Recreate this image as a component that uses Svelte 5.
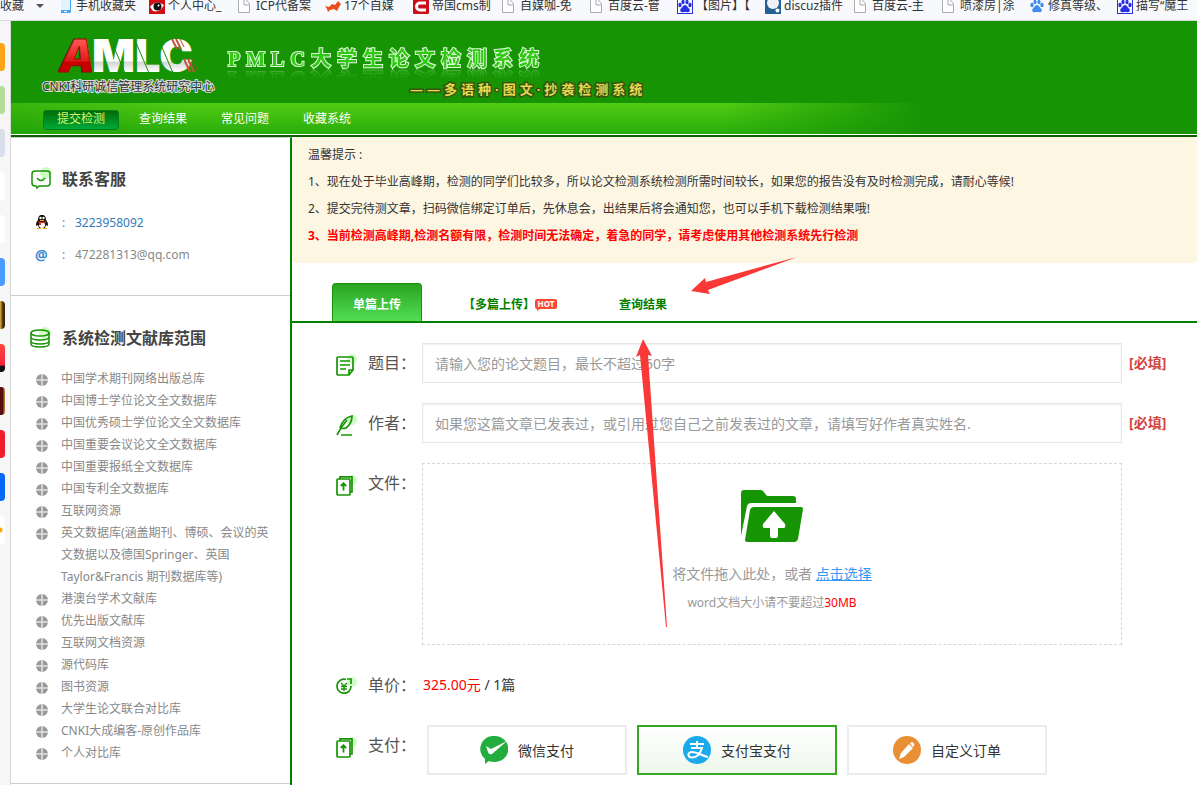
<script lang="ts">
	type Bookmark = { icon: string; text: string };

	let bookmarks: Bookmark[] = [
		{ icon: "phone", text: "手机收藏夹" },
		{ icon: "eye", text: "个人中心_" },
		{ icon: "file", text: "ICP代备案" },
		{ icon: "fox", text: "17个自媒" },
		{ icon: "c", text: "帝国cms制" },
		{ icon: "file", text: "自媒咖-免" },
		{ icon: "file", text: "百度云-管" },
		{ icon: "paw", text: "【图片】【" },
		{ icon: "discuz", text: "discuz插件" },
		{ icon: "file", text: "百度云-主" },
		{ icon: "file", text: "喷漆房|涂" },
		{ icon: "paw-light", text: "修真等级、" },
		{ icon: "paw", text: "描写“魔王" },
	];

	// left rail tiles, only their right edge is visible
	let tiles = [
		"#ffa318",
		"#b3dd98",
		"#d8dfea",
		"#ffffff",
		"#ffffff",
		"#4a9bff",
		"linear-gradient(90deg, #e8b437, #3b2a10 60%)",
		"linear-gradient(#ff4a3c, #f5203e 75%, #111 80%)",
		"linear-gradient(90deg, #5a0d10 50%, #c98a3a)",
		"#f01b2d",
		"#0567f5",
		"radial-gradient(circle at 0 50%, #ffa500 2px, #fff 3px)",
	];

	let menu = ["提交检测", "查询结果", "常见问题", "收藏系统"];

	let databases = [
		"中国学术期刊网络出版总库",
		"中国博士学位论文全文数据库",
		"中国优秀硕士学位论文全文数据库",
		"中国重要会议论文全文数据库",
		"中国重要报纸全文数据库",
		"中国专利全文数据库",
		"互联网资源",
		"英文数据库(涵盖期刊、博硕、会议的英文数据以及德国Springer、英国Taylor&Francis 期刊数据库等)",
		"港澳台学术文献库",
		"优先出版文献库",
		"互联网文档资源",
		"源代码库",
		"图书资源",
		"大学生论文联合对比库",
		"CNKI大成编客-原创作品库",
		"个人对比库",
	];

	let pays = [
		{ id: "wechat", name: "微信支付" },
		{ id: "alipay", name: "支付宝支付" },
		{ id: "custom", name: "自定义订单" },
	];

	let tab = 0;
	let pay = "alipay";
	let title = "";
	let author = "";
</script>

{#snippet uploadIcon()}
	<svg class="row-icon" viewBox="0 0 22 22">
		<circle cx="16" cy="6" r="5" fill="#cffcc4" />
		<path d="M4 5V2.800h12V18h-2" fill="none" stroke="#179404" stroke-width="1.700" />
		<rect x="1" y="5" width="13" height="16" rx="1" fill="#fff" stroke="#179404" stroke-width="1.700" />
		<path d="M7.500 16.500V9.500M4.800 12l2.700-2.700L10.200 12" fill="none" stroke="#179404" stroke-width="1.800" />
	</svg>
{/snippet}

<div class="page">
	<nav class="bookmarks">
		<a class="fav" href="#fav">收藏 <i></i></a>
		{#each bookmarks as item}
			<a class="bookmark" href="#bookmark">
				<svg width={item.icon == "phone" ? 12 : 16} height="16">
					{#if item.icon == "phone"}
						<rect x="-1" y="0" width="11" height="15" rx="1.500" fill="#49a5ee" />
						<rect x="0" y="2" width="9" height="10" fill="#e3f2ff" />
						<rect x="3" y="13" width="3" height="1" fill="#fff" />
					{:else if item.icon == "eye"}
						<rect width="16" height="16" fill="#d20d14" />
						<path d="M1 9Q7 1 15 7Q11 15 4 13Z" fill="#fff" />
						<circle cx="8.500" cy="8.500" r="4" fill="#111" />
						<circle cx="9.500" cy="7.500" r="1" fill="#fff" />
					{:else if item.icon == "file"}
						<path d="M1.500 1.500h7l4 4v9h-11zM7 2v5h5" fill="#fff" stroke="#aaa" />
					{:else if item.icon == "fox"}
						<path d="M0 8L4 9 7 6 10 7 13 3 16 6 14 9 12 13 9 11 5 12 3 14 2 11Z" fill="#e8501c" />
					{:else if item.icon == "c"}
						<rect width="16" height="16" rx="1" fill="#c8101c" />
						<path d="M13 5H7a3 3 0 0 0 0 7h6" fill="none" stroke="#fff" stroke-width="3" />
					{:else if item.icon == "discuz"}
						<rect width="16" height="16" fill="#246196" />
						<circle cx="8" cy="5" r="6" fill="#eef3f7" />
						<circle cx="12.500" cy="12.500" r="2" fill="#fff" />
					{:else}
						<g fill={item.icon == "paw" ? "#2932e1" : "#3f8cf0"}>
							{#if item.icon == "paw"}
								<path d="M0 0h16v16H0zM1 1v14h14V1z" fill-rule="evenodd" />
							{/if}
							<ellipse cx="3" cy="7" rx="1.700" ry="2.200" />
							<ellipse cx="6" cy="4" rx="1.600" ry="2.200" />
							<ellipse cx="10" cy="4" rx="1.600" ry="2.200" />
							<ellipse cx="13" cy="7" rx="1.700" ry="2.200" />
							<path d="M8 7c2 0 3 3 4.500 4 1 2-.5 3.500-2 3.200-2-.4-3-.4-5 0-1.500.3-3-1.200-2-3.200C5 10 6 7 8 7z" />
						</g>
					{/if}
				</svg>
				<span>{item.text}</span>
			</a>
		{/each}
	</nav>

	<div class="window">
		<aside class="rail">
			{#each tiles as color}
				<i style="background: {color}"></i>
			{/each}
		</aside>

		<div class="site">
			<header>
				<div class="logo">
					<svg width="150" height="36" viewBox="0 0 150 36">
						<defs>
							<linearGradient id="silver" x2="0" y2="1">
								<stop offset="0.600" stop-color="#fff" />
								<stop offset="0.620" stop-color="#d4d4d4" />
								<stop offset="0.800" stop-color="#fff" />
							</linearGradient>
							<linearGradient id="ruby" x2="0" y2="1">
								<stop offset="0.200" stop-color="#ff5a55" />
								<stop offset="0.600" stop-color="#e01818" />
								<stop offset="0.620" stop-color="#c80000" />
							</linearGradient>
						</defs>
						<text x="34" y="35" fill="url(#silver)">MLC</text>
						<text class="slanted" x="1" y="35" fill="url(#ruby)" stroke="#8d0b05">A</text>
						<path d="M114 2l5 10M118 2l5 10M126 22l6 13M130 22l6 13" stroke="#c3553a" stroke-width="2" />
						<path d="M122 2l4 8M134 22l6 13" stroke="#8f5a2a" />
						<path d="M52 1l15 35M76 1l15 35M100 1l15 35" stroke="#179404" />
					</svg>
					<p>CNKI科研诚信管理系统研究中心</p>
				</div>
				<div class="headline">
					<h1>PMLC大学生论文检测系统</h1>
					<p>——多语种·图文·抄袭检测系统</p>
				</div>
			</header>

			<nav class="menu">
				{#each menu as entry, i}
					<a href="#menu" class:active={i == 0}>{entry}</a>
				{/each}
			</nav>

			<div class="content">
				<aside class="sidebar">
					<section class="contact">
						<h2>
							<svg width="22" height="22" viewBox="0 0 22 22">
								<circle cx="16" cy="6" r="6" fill="#cffcc4" />
								<path d="M5 4h12q3 0 3 3v9q0 3-3 3H9l-2 2-1-2H5q-3 0-3-3V7q0-3 3-3z" fill="none" stroke="#179404" stroke-width="1.500" />
								<path d="M7 11q4 5 8 0" fill="none" stroke="#179404" stroke-width="1.500" />
							</svg>
							联系客服
						</h2>
						<p>
							<svg width="14" height="16" viewBox="0 0 14 16">
								<path d="M7 1c3 0 4 2 4 5 2 2 2 4 2 6l-2-1-1 3H4l-1-3-2 1c0-2 0-4 2-6 0-3 1-5 4-5z" fill="#111" />
								<ellipse cx="7" cy="11" rx="3" ry="3" fill="#fff" />
								<circle cx="5.500" cy="4" r="1.200" fill="#fff" />
								<circle cx="8.500" cy="4" r="1.200" fill="#fff" />
								<path d="M3 7q4 2 8 0v2H6v2H4V9z" fill="#e3281c" />
								<path d="M2 14h4v1H2zM8 14h4v1H8zM5 6h4v1H5z" fill="#f5ac13" />
							</svg>
							<b>:</b>
							<a href="#qq">3223958092</a>
						</p>
						<p>
							<span class="at">@</span>
							<b>:</b>
							<span>472281313@qq.com</span>
						</p>
					</section>

					<section class="library">
						<h2>
							<svg width="22" height="22" viewBox="0 0 22 22">
								<circle cx="15" cy="7" r="6" fill="#cffcc4" />
								<g fill="none" stroke="#179404" stroke-width="1.500">
									<ellipse cx="10" cy="7" rx="9" ry="3" />
									<path d="M1 7v11c0 4 18 4 18 0V7M1 11c0 4 18 4 18 0M1 15c0 4 18 4 18 0" />
								</g>
							</svg>
							系统检测文献库范围
						</h2>
						<ul>
							{#each databases as db}
								<li>
									<svg width="12" height="12" viewBox="0 0 12 12">
										<circle cx="6" cy="6" r="6" fill="#999" />
										<path d="M6 0v12M0 6h12" stroke="#e4e4e4" stroke-width="1.500" />
									</svg>
									<span>{db}</span>
								</li>
							{/each}
						</ul>
					</section>
				</aside>

				<main>
					<div class="tips">
						<p>温馨提示 :</p>
						<p>1、现在处于毕业高峰期，检测的同学们比较多，所以论文检测系统检测所需时间较长，如果您的报告没有及时检测完成，请耐心等候!</p>
						<p>2、提交完待测文章，扫码微信绑定订单后，先休息会，出结果后将会通知您，也可以手机下载检测结果哦!</p>
						<p class="warn">3、当前检测高峰期,检测名额有限，检测时间无法确定，着急的同学，请考虑使用其他检测系统先行检测</p>
					</div>

					<div class="tabs">
						<button class:active={tab == 0} on:click={() => (tab = 0)}>单篇上传</button>
						<button class:active={tab == 1} on:click={() => (tab = 1)}>【多篇上传】<span class="hot">HOT</span></button>
						<button class:active={tab == 2} on:click={() => (tab = 2)}>查询结果</button>
					</div>

					<form on:submit|preventDefault>
						<div class="row">
							<svg class="row-icon" viewBox="0 0 22 22">
								<circle cx="16" cy="5" r="5" fill="#cffcc4" />
								<path d="M2 3h14q1 0 1 1v12l-4 5H2q-1 0-1-1V4q0-1 1-1zM17 16h-4v5M4 7h10M4 11h10M4 15h6" fill="none" stroke="#179404" stroke-width="1.700" />
							</svg>
							<label for="title">题目：</label>
							<input id="title" type="text" bind:value={title} placeholder="请输入您的论文题目，最长不超过50字" />
							<span class="required">[必填]</span>
						</div>

						<div class="row">
							<svg class="row-icon" viewBox="0 0 22 22">
								<circle cx="16" cy="6" r="5" fill="#cffcc4" />
								<path d="M1 21Q5 13 11 6M4 14C6 7 10 3 16 2c0 4-2 9-6 12q-3 1-6 0M5 21h11" fill="none" stroke="#179404" stroke-width="1.700" />
							</svg>
							<label for="author">作者：</label>
							<input id="author" type="text" bind:value={author} placeholder="如果您这篇文章已发表过，或引用过您自己之前发表过的文章，请填写好作者真实姓名." />
							<span class="required">[必填]</span>
						</div>

						<div class="row">
							{@render uploadIcon()}
							<span class="label">文件：</span>
							<div class="drop">
								<svg width="62" height="53" viewBox="0 0 62 53">
									<path d="M0 46V3q0-3 3-3h16q2 0 3 1l4 5h26q3 0 3 3v4H10q-3 0-4 3z" fill="#179404" />
									<path d="M13 17h47q2 0 2 2l-5 30q-1 3-3 3H6q-2 0-2-2l5-30q1-3 4-3z" fill="#179404" />
									<path d="M33 21l11 13q1 3-1 4h-6v8q0 2-2 2h-4q-2 0-2-2v-8h-6q-2-1-1-4z" fill="#fff" />
								</svg>
								<p>将文件拖入此处，或者 <a href="#choose">点击选择</a></p>
								<p class="hint">word文档大小请不要超过<em>30MB</em></p>
							</div>
						</div>

						<div class="row">
							<svg class="row-icon" viewBox="0 0 22 22">
								<circle cx="16" cy="6" r="5" fill="#cffcc4" />
								<path d="M10 3.500A7 7 0 1 0 15 10M11 3h4v5" fill="none" stroke="#179404" stroke-width="1.700" />
								<path d="M5 7l3 3 3-3M8 10v5M5 10.500h6M5 13h6" fill="none" stroke="#179404" stroke-width="1.400" />
							</svg>
							<span class="label">单价：</span>
							<p class="price"><em>325.00元</em> / 1篇</p>
						</div>

						<div class="row">
							{@render uploadIcon()}
							<span class="label">支付：</span>
							<div class="pays">
								{#each pays as item}
									<button type="button" class:chosen={pay == item.id} on:click={() => (pay = item.id)}>
										<svg width="28" height="28" viewBox="0 0 28 28">
											{#if item.id == "wechat"}
												<path d="M14 0a14 13 0 1 1-5 25l-4 3v-5A13 13 0 0 1 14 0z" fill="#22ad3e" />
												<path d="M6 10l5 3L27 5 12 18q-3 1-4-2z" fill="#fff" />
											{:else if item.id == "alipay"}
												<circle cx="14" cy="14" r="14" fill="#1aa9ea" />
												<path d="M7 8h14M14 5v7M8 12h11q-3 9-9 9.500c-6 .5-6-5.500-1-5.500 6 0 10 4 16 5" fill="none" stroke="#fff" stroke-width="2" />
											{:else}
												<circle cx="14" cy="14" r="14" fill="#e99034" />
												<path d="M16 8l4 4-9 9-5 2 2-6zM17 7l2-1q3 1 2 4l-1 1z" fill="#fff" />
											{/if}
										</svg>
										{item.name}
									</button>
								{/each}
							</div>
						</div>
					</form>

					<!-- red pointers to the result tab -->
					<svg class="pointers" width="162" height="372" viewBox="0 0 162 372">
						<g fill="#fb3838">
							<path d="M55 34L69 21 70 25 161 0 72 33 74 37Z" />
							<path d="M7 82L16 99 12 98 31 370 30 370 4 98 0 100Z" />
						</g>
					</svg>
				</main>
			</div>
		</div>
	</div>
</div>

<style>
	:global(body) {
		margin: 0;
		background: #fff;
	}

	.page {
		display: flex;
		flex-direction: column;
		min-height: 100vh;
		overflow: hidden;
		font-family: "Noto Sans", "Noto Sans CJK SC", sans-serif;
		font-size: 12px;
		color: #333;
	}

	.page * {
		box-sizing: border-box;
	}

	p, h1, h2, ul {
		margin: 0;
		padding: 0;
	}

	a {
		text-decoration: none;
	}

	em {
		font-style: normal;
		color: #f00;
	}

	button, input {
		font-family: inherit;
	}

	/* browser bar */
	.bookmarks {
		display: flex;
		height: 21px;
		background: #f8f9fd;
		border-bottom: 1px solid #d8dbe3;
	}
	.bookmarks a {
		display: flex;
		flex-shrink: 0;
		align-items: center;
		gap: 3px;
		height: 12px;
		line-height: 12px;
		color: #333;
		white-space: nowrap;
	}
	.bookmarks .fav {
		width: 61px;
		gap: 12px;
	}
	.fav i {
		border: 4px solid transparent;
		border-top-color: #555;
		border-bottom: 0;
	}
	.bookmark {
		width: 88px;
	}
	.bookmark svg {
		flex-shrink: 0;
	}

	.window {
		display: flex;
		flex: 1;
	}
	.rail {
		display: flex;
		flex-direction: column;
		gap: 15px;
		width: 11px;
		padding-top: 22px;
		background: #f6f6f6;
		border-right: 1px solid #d8d8d8;
	}
	.rail i {
		width: 5px;
		height: 28px;
		border-radius: 0 4px 4px 0;
	}

	.site {
		display: flex;
		flex: 1;
		flex-direction: column;
		min-width: 0;
	}

	header {
		display: flex;
		height: 82px;
		padding-left: 31px;
		background: #179404;
	}
	.logo {
		width: 184px;
		padding-top: 16px;
	}
	.logo svg {
		display: block;
		margin-left: 16px;
		font-family: Inter, sans-serif;
		font-size: 45px;
		font-weight: 900;
	}
	.slanted {
		font-style: italic;
	}
	.logo p {
		padding-top: 4px;
		line-height: 20px;
		color: #333;
		white-space: nowrap;
		-webkit-text-stroke: 2px #ddd;
		paint-order: stroke fill;
	}
	.headline {
		padding-top: 24px;
		white-space: nowrap;
	}
	.headline h1 {
		padding-left: 2px;
		font-family: "Liberation Serif", "Noto Sans CJK SC", serif;
		font-size: 20px;
		line-height: 28px;
		letter-spacing: 6px;
		color: #2fc912;
		-webkit-text-stroke: 2px #e2f5df;
		paint-order: stroke fill;
		-webkit-box-reflect: below -8px linear-gradient(transparent 50%, rgba(0, 0, 0, 0.4));
	}
	.headline p {
		padding-left: 184px;
		font-size: 13px;
		font-weight: bold;
		line-height: 32px;
		letter-spacing: 4px;
		color: #e8d94f;
		-webkit-text-stroke: 3px #35560f;
		paint-order: stroke fill;
	}

	.menu {
		display: flex;
		gap: 6px;
		height: 34px;
		padding: 7px 32px 0;
		background:
			linear-gradient(90deg, rgba(23, 148, 4, 0.4), transparent 15%, transparent 60%, #179404 77%),
			linear-gradient(#52cb13, #28ac0a);
		border-bottom: 2px solid #0b6102;
		box-shadow: inset 0 -1px #fff;
	}
	.menu a {
		width: 76px;
		height: 20px;
		line-height: 18px;
		text-align: center;
		color: #fff;
	}
	.menu .active {
		color: #d6f56b;
		background: linear-gradient(#006d08, #00a838);
		border: 1px solid #078015;
		border-radius: 3px;
		line-height: 16px;
	}

	.content {
		display: flex;
		flex: 1;
	}

	.sidebar {
		flex-shrink: 0;
		width: 281px;
		color: #888;
		border-top: 1px solid #ccc;
		border-right: 2px solid #008000;
	}
	.sidebar section {
		border-bottom: 1px solid #ccc;
	}
	.sidebar h2 {
		display: flex;
		gap: 10px;
		padding-left: 19px;
		font-size: 16px;
		line-height: 24px;
		color: #444;
	}
	.contact {
		padding: 29px 0 25px;
	}
	.contact h2 {
		margin-bottom: 15px;
	}
	.contact p {
		display: flex;
		align-items: center;
		height: 32px;
		padding-left: 24px;
	}
	.contact a {
		color: #337ab7;
	}
	.contact b {
		width: 13px;
		margin-left: 13px;
		font-weight: normal;
	}
	.at {
		width: 14px;
		font-size: 14px;
		font-weight: bold;
		color: #3a87cf;
	}

	.library {
		padding: 30px 0 19px;
	}
	.library h2 {
		margin-bottom: 18px;
	}
	li {
		display: flex;
		gap: 13px;
		padding: 0 14px 0 25px;
		line-height: 22px;
		list-style: none;
	}
	li svg {
		flex-shrink: 0;
		margin-top: 6px;
	}

	main {
		position: relative;
		flex: 1;
		min-width: 0;
	}
	.tips {
		padding: 4px 16px 14px;
		line-height: 27px;
		background: #fdf6e3;
		border-radius: 4px;
	}
	.warn {
		font-weight: bold;
		color: #f00;
	}

	.tabs {
		display: flex;
		gap: 20px;
		padding: 20px 40px 0;
		border-bottom: 2px solid #008000;
	}
	.tabs button {
		display: flex;
		align-items: center;
		height: 38px;
		padding: 3px 20px 0;
		font-size: 12px;
		font-weight: bold;
		color: #008000;
		background: none;
		border: 1px solid transparent;
		border-bottom: 0;
		border-radius: 4px 4px 0 0;
	}
	.tabs .active {
		color: #fff;
		background: linear-gradient(#2aa520, #52dd55);
		border-color: #179404;
	}
	.hot {
		position: relative;
		width: 22px;
		font-size: 8px;
		line-height: 10px;
		text-align: center;
		color: #fff;
		background: #fb4b37;
		border-radius: 2px;
	}
	.hot::after {
		content: "";
		position: absolute;
		top: 10px;
		left: 2px;
		border-top: 2px solid #fb4b37;
		border-right: 3px solid transparent;
	}

	form {
		display: flex;
		flex-direction: column;
		gap: 20px;
		padding: 20px 30px 9px 44px;
	}
	.row {
		display: grid;
		grid-template-columns: 32px 54px minmax(0, 1fr) 45px;
		align-items: start;
	}
	.row-icon {
		width: 22px;
		height: 22px;
		margin-top: 11px;
	}
	label, .label {
		font-size: 16px;
		line-height: 40px;
		color: #555;
		white-space: nowrap;
	}
	input {
		width: 100%;
		height: 40px;
		padding: 0 12px;
		font-size: 14px;
		border: 1px solid #e6e6e6;
		box-shadow: inset 0 1px 2px #eee;
		outline: none;
	}
	input::placeholder {
		color: #999;
	}
	.required {
		padding-left: 7px;
		font-size: 14px;
		font-weight: bold;
		line-height: 40px;
		color: #d0453f;
		white-space: nowrap;
	}

	.drop {
		padding: 26px 0 29px;
		text-align: center;
		color: #999;
		border: 1px dashed #d5d5d5;
	}
	.drop svg {
		display: block;
		margin: 0 auto 19px;
	}
	.drop p {
		font-size: 14px;
		line-height: 24px;
	}
	.drop a {
		color: #3498f5;
		text-decoration: underline;
	}
	.drop .hint {
		margin-top: 5px;
		font-size: 12px;
	}
	.price {
		padding-left: 1px;
		font-size: 14px;
		line-height: 40px;
	}

	.pays {
		display: flex;
		gap: 10px;
		padding-left: 5px;
	}
	.pays button {
		display: flex;
		align-items: center;
		justify-content: center;
		gap: 10px;
		width: 200px;
		height: 50px;
		padding: 0;
		font-size: 14px;
		color: #333;
		background: #fff;
		border: 2px solid #ececec;
	}
	.pays .chosen {
		background: linear-gradient(#fff, #edf7eb);
		border-color: #36a623;
	}

	.pointers {
		position: absolute;
		top: 120px;
		left: 344px;
		pointer-events: none;
	}
</style>
